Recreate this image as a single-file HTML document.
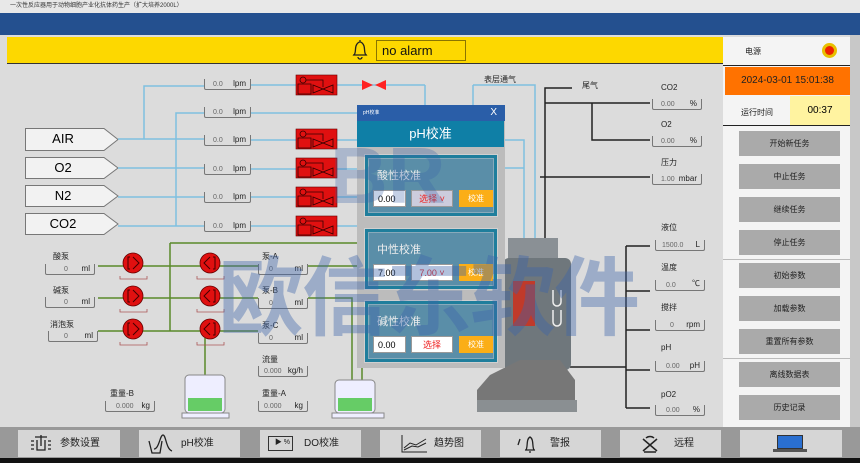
<!DOCTYPE html>
<html><head><meta charset="utf-8"><style>
*{margin:0;padding:0;box-sizing:border-box}
body{width:860px;height:463px;overflow:hidden;background:#dcdcdc;font-family:"Liberation Sans","Noto Sans CJK SC",sans-serif;position:relative}
.a{position:absolute}
.t{position:absolute;font-size:8px;color:#222;white-space:nowrap}
.box{position:absolute;height:11px;border-bottom:1px solid #777;border-left:1px solid #777;border-right:1px solid #777;border-radius:0 0 2px 2px;font-size:7px;color:#666}
.box span{position:absolute;right:4px;bottom:1px;font-size:8px;color:#222}
.box i{position:absolute;font-style:normal;bottom:1px}
.gas{position:absolute;left:25px;width:76px;height:22px;font-size:13px;text-align:center;line-height:22px}
.rb{position:absolute;left:739px;width:101px;height:25px;background:#aaa;font-size:8px;text-align:center;line-height:25px;color:#222}
.bb{position:absolute;top:430px;height:27px;background:#d6d6d6;font-size:10px;line-height:27px;color:#222}
.sec{position:absolute;left:364px;width:134px;background:#1f7e9c;border:1px solid #d0d0d0;padding:3px}
.sec .in{border:1px solid #8ab;background:#5a8ea8;height:100%;position:relative}
.sec .h{position:absolute;left:8px;top:8px;color:#eee;font-size:11px}
.fld{position:absolute;top:31px;height:17px;background:#fff;font-size:9px;line-height:17px;border:1px solid #999}
.btn{position:absolute;top:31px;height:17px;width:34px;background:#fbae17;color:#fff;font-size:8px;text-align:center;line-height:17px}
</style></head><body>
<div class="a" style="left:0;top:0;width:860px;height:13px;background:#e8e8e8;font-size:6px;line-height:13px;padding-left:10px;color:#333">一次性反应器用于动物细胞产业化抗体药生产（扩大培养2000L）</div>
<div class="a" style="left:0;top:13px;width:860px;height:22px;background:#24508f"></div>
<div class="a" style="left:850px;top:35px;width:10px;height:393px;background:#c8c8c8"></div>
<div class="a" style="left:7px;top:37px;width:716px;height:27px;background:#fdd800;border-bottom:1px solid #333"></div>
<svg class="a" style="left:349px;top:38px" width="22" height="24" viewBox="0 0 22 24"><path d="M11 2v2M5 17c2-2 1-6 2-9 1-3 3-4 4-4s3 1 4 4c1 3 0 7 2 9zM4 17h14M9 19a2 2 0 0 0 4 0" fill="none" stroke="#222" stroke-width="1.3"/></svg>
<div class="a" style="left:376px;top:40px;width:90px;height:21px;border:1px solid #8a7500;font-size:13px;line-height:19px;padding-left:5px;color:#111">no alarm</div>
<!-- right panel -->
<div class="a" style="left:723px;top:37px;width:127px;height:390px;background:#f4f4f4"></div>
<div class="t" style="left:745px;top:46px">电源</div>
<div class="a" style="left:822px;top:43px;width:15px;height:15px;border-radius:50%;background:#e8c000"><div class="a" style="left:3px;top:3px;width:9px;height:9px;border-radius:50%;background:#e20"></div></div>
<div class="a" style="left:723px;top:65px;width:127px;height:1px;background:#222"></div>
<div class="a" style="left:725px;top:67px;width:125px;height:28px;background:#ff7200;font-size:10px;line-height:28px;text-align:center;color:#222">2024-03-01 15:01:38</div>
<div class="t" style="left:741px;top:107px">运行时间</div>
<div class="a" style="left:790px;top:96px;width:60px;height:29px;background:#fff3a0;font-size:10px;text-align:center;line-height:29px">00:37</div>
<div class="a" style="left:723px;top:125px;width:127px;height:1px;background:#222"></div>
<div class="a" style="left:723px;top:259px;width:127px;height:1px;background:#bbb"></div>
<div class="a" style="left:723px;top:358px;width:127px;height:1px;background:#bbb"></div>
<div class="rb" style="top:131px">开始新任务</div><div class="rb" style="top:164px">中止任务</div><div class="rb" style="top:197px">继续任务</div><div class="rb" style="top:230px">停止任务</div>
<div class="rb" style="top:263px">初始参数</div><div class="rb" style="top:296px">加载参数</div><div class="rb" style="top:329px">重置所有参数</div>
<div class="rb" style="top:362px">离线数据表</div><div class="rb" style="top:395px">历史记录</div>
<!-- lines -->
<svg class="a" style="left:0;top:0" width="860" height="463">
<g fill="#f2f2f2" stroke="#777"><path d="M25.5 128.5H104L118 139.5L104 150.5H25.5Z"/><path d="M25.5 157.5H104L118 168L104 178.5H25.5Z"/><path d="M25.5 185.5H104L118 196L104 206.5H25.5Z"/><path d="M25.5 213.5H104L118 224L104 234.5H25.5Z"/></g>
<g stroke="#7ec0e0" stroke-width="1.5" fill="none">
<path d="M118 139H204M144 139V86H204M176 226V113H204M118 168H204M118 197H204M118 226H204"/>
<path d="M250 85H296M337 85H425V85M250 113H360M250 140H296M250 169H296M250 197H296M250 226H296M337 140H360M337 169H360M337 197H360M337 226H360"/>
<path d="M425 85V105M473 85H535V250M473 85V105M505 140H524V250M505 168H524"/>
</g>
<g stroke="#5a8a2a" stroke-width="1.5" fill="none"><path d="M98 266H258M98 298H258M98 331H258M170 243V331M170 243H360M205 338V380M308 266H360M308 298H352V380M362 300V380"/></g>
<g stroke="#222" stroke-width="1.5" fill="none"><path d="M545 255V88H572M545 103H650M592 103V140H650M540 177H650M626 246V408M626 246H650M626 291H650M626 330H650M626 370H650M626 408H650M570 367H626"/></g>
<g><path d="M362 80L373 85L362 90ZM386 80L375 85L386 90Z" fill="#f22"/></g>
<defs><g id="v"><rect x="0" y="0" width="41" height="20" fill="#e01010" stroke="#600" stroke-width=".6"/><g fill="none" stroke="#300" stroke-width=".8"><circle cx="7" cy="5" r="3"/><path d="M10 5H27V12M2 9H15V19H2ZM17 10L37 18V10L17 18Z"/></g></g>
<g id="p"><circle r="10" fill="#e01010" stroke="#600" stroke-width=".8"/><path d="M-3 -6H-5V6H-3M0 -6L6 0L0 6" fill="none" stroke="#400" stroke-width="1"/></g></defs>
<use href="#v" x="296" y="75"/><use href="#v" x="296" y="129"/><use href="#v" x="296" y="158"/><use href="#v" x="296" y="187"/><use href="#v" x="296" y="216"/>
<use href="#p" x="133" y="263"/><use href="#p" x="133" y="296"/><use href="#p" x="133" y="329"/>
<g transform="translate(420 0) scale(-1 1)"><use href="#p" x="210" y="263"/><use href="#p" x="210" y="296"/><use href="#p" x="210" y="329"/></g>
<g fill="none" stroke="#a55" stroke-width=".8"><path d="M120 276V279H147V276M197 276V279H224V276M120 309V312H147V309M197 309V312H224V309M120 342V345H147V342M197 342V345H224V342"/></g>
<g fill="#eef" stroke="#888"><rect x="185" y="375" width="40" height="38" rx="4"/><rect x="335" y="380" width="40" height="33" rx="4"/><rect x="182" y="413" width="47" height="5"/><rect x="332" y="413" width="52" height="5"/></g>
<g fill="#6c6"><rect x="188" y="398" width="34" height="13"/><rect x="338" y="398" width="34" height="13"/></g>
<!-- reactor -->
<rect x="478" y="258" width="14" height="100" fill="#888"/>
<rect x="508" y="238" width="50" height="32" fill="#8a9095"/>
<rect x="503" y="258" width="68" height="112" rx="6" fill="#6f777c"/>
<rect x="513" y="281" width="22" height="45" fill="#c03a2a"/>
<path d="M553 290v12a4 4 0 0 0 8 0v-12M553 310v12a4 4 0 0 0 8 0v-12" fill="none" stroke="#eee" stroke-width="1.5"/>
<path d="M490 375L520 360L560 360L575 380V405H477V390Z" fill="#777"/>
<rect x="477" y="400" width="100" height="12" fill="#8a8f92"/>
</svg>
<div class="gas" style="top:128px">AIR</div><div class="gas" style="top:157px">O2</div><div class="gas" style="top:185px">N2</div><div class="gas" style="top:213px">CO2</div>
<div class="box" style="left:204px;top:79px;width:47px"><i style="left:8px">0.0</i><span>lpm</span></div>
<div class="box" style="left:204px;top:107px;width:47px"><i style="left:8px">0.0</i><span>lpm</span></div>
<div class="box" style="left:204px;top:135px;width:47px"><i style="left:8px">0.0</i><span>lpm</span></div>
<div class="box" style="left:204px;top:164px;width:47px"><i style="left:8px">0.0</i><span>lpm</span></div>
<div class="box" style="left:204px;top:192px;width:47px"><i style="left:8px">0.0</i><span>lpm</span></div>
<div class="box" style="left:204px;top:221px;width:47px"><i style="left:8px">0.0</i><span>lpm</span></div>
<div class="t" style="left:484px;top:74px">表层通气</div><div class="t" style="left:582px;top:80px">尾气</div>
<div class="t" style="left:53px;top:251px">酸泵</div><div class="box" style="left:45px;top:264px;width:50px"><i style="left:18px">0</i><span>ml</span></div>
<div class="t" style="left:53px;top:285px">碱泵</div><div class="box" style="left:45px;top:297px;width:50px"><i style="left:18px">0</i><span>ml</span></div>
<div class="t" style="left:50px;top:319px">消泡泵</div><div class="box" style="left:48px;top:331px;width:50px"><i style="left:15px">0</i><span>ml</span></div>
<div class="t" style="left:262px;top:251px">泵-A</div><div class="box" style="left:258px;top:264px;width:50px"><i style="left:10px">0</i><span>ml</span></div>
<div class="t" style="left:262px;top:285px">泵-B</div><div class="box" style="left:258px;top:298px;width:50px"><i style="left:10px">0</i><span>ml</span></div>
<div class="t" style="left:262px;top:320px">泵-C</div><div class="box" style="left:258px;top:333px;width:50px"><i style="left:10px">0</i><span>ml</span></div>
<div class="t" style="left:262px;top:354px">流量</div><div class="box" style="left:258px;top:366px;width:50px"><i style="left:5px">0.000</i><span>kg/h</span></div>
<div class="t" style="left:262px;top:388px">重量-A</div><div class="box" style="left:258px;top:401px;width:50px"><i style="left:5px">0.000</i><span>kg</span></div>
<div class="t" style="left:110px;top:388px">重量-B</div><div class="box" style="left:105px;top:401px;width:50px"><i style="left:10px">0.000</i><span>kg</span></div>
<div class="t" style="left:661px;top:83px">CO2</div><div class="box" style="left:652px;top:99px;width:50px"><i style="left:8px">0.00</i><span>%</span></div>
<div class="t" style="left:661px;top:120px">O2</div><div class="box" style="left:652px;top:136px;width:50px"><i style="left:8px">0.00</i><span>%</span></div>
<div class="t" style="left:661px;top:157px">压力</div><div class="box" style="left:652px;top:174px;width:50px"><i style="left:8px">1.00</i><span>mbar</span></div>
<div class="t" style="left:661px;top:222px">液位</div><div class="box" style="left:655px;top:240px;width:50px"><i style="left:6px">1500.0</i><span>L</span></div>
<div class="t" style="left:661px;top:262px">温度</div><div class="box" style="left:655px;top:280px;width:50px"><i style="left:10px">0.0</i><span>℃</span></div>
<div class="t" style="left:661px;top:302px">搅拌</div><div class="box" style="left:655px;top:320px;width:50px"><i style="left:14px">0</i><span>rpm</span></div>
<div class="t" style="left:661px;top:343px">pH</div><div class="box" style="left:655px;top:361px;width:50px"><i style="left:10px">0.00</i><span>pH</span></div>
<div class="t" style="left:661px;top:390px">pO2</div><div class="box" style="left:655px;top:405px;width:50px"><i style="left:10px">0.00</i><span>%</span></div>
<!-- dialog -->
<div class="a" style="left:357px;top:105px;width:148px;height:263px;background:#bcbcbc"></div>
<div class="a" style="left:357px;top:105px;width:148px;height:16px;background:#2a5ea8;color:#fff;font-size:5px;line-height:16px;padding-left:6px">pH校准<span style="position:absolute;right:8px;font-size:10px">X</span></div>
<div class="a" style="left:357px;top:121px;width:147px;height:26px;background:#0f7fa6;color:#fff;font-size:13px;text-align:center;line-height:26px">pH校准</div>
<div class="sec" style="top:154px;height:63px"><div class="in"><div class="h">酸性校准</div><div class="fld" style="left:4px;width:33px;padding-left:4px">0.00</div><div class="fld" style="left:42px;width:42px;color:#e22;text-align:center;background:#ccd">选择 ˅</div><div class="btn" style="left:90px">校准</div></div></div>
<div class="sec" style="top:228px;height:62px"><div class="in"><div class="h">中性校准</div><div class="fld" style="left:4px;width:33px;padding-left:4px">7.00</div><div class="fld" style="left:42px;width:42px;color:#e22;text-align:center">7.00 ˅</div><div class="btn" style="left:90px">校准</div></div></div>
<div class="sec" style="top:300px;height:63px"><div class="in"><div class="h">碱性校准</div><div class="fld" style="left:4px;width:33px;padding-left:4px">0.00</div><div class="fld" style="left:42px;width:42px;color:#e22;text-align:center">选择</div><div class="btn" style="left:90px">校准</div></div></div>
<!-- watermark -->
<div class="a" style="left:330px;top:130px;font-size:80px;font-weight:bold;color:rgba(60,100,170,.3)">BR</div>
<div class="a" style="left:218px;top:228px;font-size:86px;font-weight:bold;color:rgba(60,100,170,.4);letter-spacing:-2px">欧信东软件</div>
<!-- bottom -->
<div class="a" style="left:0;top:427px;width:860px;height:31px;background:#999"></div>
<div class="a" style="left:0;top:458px;width:860px;height:5px;background:#111"></div>
<div class="bb" style="left:18px;width:102px;padding-left:42px"><svg class="a" style="left:12px;top:4px" width="22" height="20"><path d="M11 1V12M7 6V16H15V6M1 7H4M1 11H4M1 15H4M18 7H21M18 11H21M18 15H21M5 3H17" fill="none" stroke="#222" stroke-width="1.3"/></svg>参数设置</div>
<div class="bb" style="left:139px;width:101px;padding-left:42px"><svg class="a" style="left:8px;top:3px" width="26" height="22"><path d="M2 8L5 20H13L15 8M7 16C12 16 13 2 16 2S19 16 25 18" fill="none" stroke="#222" stroke-width="1.3"/></svg>pH校准</div>
<div class="bb" style="left:260px;width:101px;padding-left:44px"><span style="position:absolute;left:8px;top:6px;width:25px;height:15px;border:1.5px solid #333;font-size:7px;line-height:12px;text-align:right;padding-right:2px">▶ %</span>DO校准</div>
<div class="bb" style="left:380px;width:101px;padding-left:54px"><svg class="a" style="left:20px;top:4px" width="28" height="20"><path d="M2 1V18H27M4 14L10 9L16 11L26 5M4 16L12 12L18 13L26 9" fill="none" stroke="#222" stroke-width="1"/></svg>趋势图</div>
<div class="bb" style="left:500px;width:101px;padding-left:50px"><svg class="a" style="left:14px;top:4px" width="26" height="20"><path d="M6 5L4 11M12 16C14 13 12 5 16 3 20 5 18 13 20 16ZM11 16H21M15 18H17" fill="none" stroke="#222" stroke-width="1.3"/></svg>警报</div>
<div class="bb" style="left:620px;width:101px;padding-left:54px"><svg class="a" style="left:20px;top:4px" width="20" height="20"><path d="M3 5L17 17M17 5L3 17M6 4A6 6 0 0 1 14 4M4 18H16" fill="none" stroke="#222" stroke-width="1.5"/></svg>远程</div>
<div class="bb" style="left:740px;width:102px"><span style="position:absolute;left:37px;top:5px;width:26px;height:14px;background:#2a6fd0;border:1px solid #333"></span><span style="position:absolute;left:33px;top:19px;width:34px;height:3px;background:#555"></span></div>
</body></html>
